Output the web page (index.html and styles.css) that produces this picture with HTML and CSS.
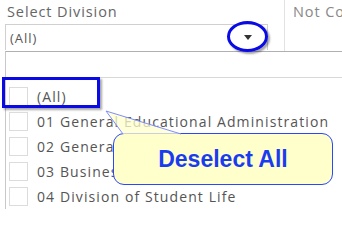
FILE: index.html
```html
<!DOCTYPE html>
<html>
<head>
<meta charset="utf-8">
<link rel="stylesheet" href="styles.css">
</head>
<body>
<div class="page">
  <div class="header">
    <div class="filter">
      <div class="title">Select Division</div>
      <div class="combo">
        <span class="combo-value">(All)</span>
        <span class="arrow"></span>
      </div>
    </div>
    <div class="other">Not Co</div>
  </div>
  <div class="panel">
    <div class="search"></div>
    <ul class="list">
      <li class="item"><span class="box"></span><span class="label">(All)</span></li>
      <li class="item"><span class="box"></span><span class="label">01 General Educational Administration</span></li>
      <li class="item"><span class="box"></span><span class="label">02 General Administration</span></li>
      <li class="item"><span class="box"></span><span class="label">03 Business Affairs</span></li>
      <li class="item"><span class="box"></span><span class="label">04 Division of Student Life</span></li>
    </ul>
  </div>
  <div class="mark-rect"></div>
  <div class="mark-ellipse"></div>
  <svg class="pointer" width="342" height="209" viewBox="0 0 342 209">
    <polygon points="106,111 123,134 181,134" fill="#ffffcc" fill-opacity="0.75"/>
    <polyline points="123,134 106,111 181,134" fill="none" stroke="#7f8cff" stroke-width="1"/>
  </svg>
  <div class="callout">Deselect All</div>
</div>
</body>
</html>
```
FILE: styles.css
```css
html, body {
  margin: 0;
  padding: 0;
  background: #fff;
}
.page {
  position: relative;
  width: 342px;
  height: 209px;
  overflow: hidden;
  font-family: "Open Sans", "Noto Sans", sans-serif;
  font-size: 14px;
  letter-spacing: 1.1px;
  color: #555;
}
.header {
  display: flex;
  height: 51px;
}
.filter {
  width: 284px;
  flex: none;
  border-right: 1px solid #e2e2e2;
  display: flex;
  flex-direction: column;
}
.title {
  height: 24px;
  line-height: 24px;
  padding-left: 7px;
  color: #666;
  font-size: 14.5px;
  letter-spacing: 0.9px;
}
.combo {
  margin-left: 5px;
  width: 263px;
  height: 26px;
  border: 1px solid #d0d0d0;
  border-bottom: none;
  display: flex;
  align-items: center;
  justify-content: space-between;
  padding-left: 4px;
  padding-right: 15px;
  box-sizing: border-box;
  font-size: 13px;
  letter-spacing: 1px;
  color: #555;
}
.arrow {
  width: 0;
  height: 0;
  border-left: 4px solid transparent;
  border-right: 4px solid transparent;
  border-top: 5px solid #333;
}
.other {
  padding-left: 8px;
  line-height: 24px;
  font-size: 14.5px;
  letter-spacing: 0.9px;
  color: #888;
  white-space: nowrap;
}
.panel {
  margin-left: 5px;
  border-left: 1px solid #c8c8c8;
  border-top: 1px solid #b0b0b0;
  height: 160px;
}
.search {
  height: 25px;
  border-bottom: 1px solid #d8d8d8;
}
.list {
  list-style: none;
  margin: 0;
  padding: 6px 0 0 0;
}
.item {
  display: flex;
  align-items: center;
  height: 25px;
  white-space: nowrap;
}
.box {
  width: 17px;
  height: 17px;
  border: 1px solid #dcdcdc;
  margin-left: 3px;
  margin-right: 9px;
  flex: none;
}
.label {
  color: #555;
}
.mark-rect {
  position: absolute;
  left: 2px;
  top: 77px;
  width: 92px;
  height: 25px;
  border: 3px solid #0a0ae6;
  box-shadow: 2px 2px 2px rgba(0,0,0,0.35);
}
.mark-ellipse {
  position: absolute;
  left: 227px;
  top: 21px;
  width: 35px;
  height: 25px;
  border: 3px solid #0a0ae6;
  border-radius: 50%;
  box-shadow: 2px 2px 2px rgba(0,0,0,0.35);
}
.pointer {
  position: absolute;
  left: 0;
  top: 0;
  z-index: 2;
}
.callout {
  position: absolute;
  left: 113px;
  top: 133px;
  width: 218px;
  height: 50px;
  background: #ffffcc;
  border: 1px solid #2a46ff;
  border-radius: 11px;
  display: flex;
  align-items: center;
  justify-content: center;
  font-family: "Liberation Sans", Arial, sans-serif;
  font-weight: bold;
  font-size: 23px;
  letter-spacing: 0;
  color: #1a3cf0;
  z-index: 1;
}
```
